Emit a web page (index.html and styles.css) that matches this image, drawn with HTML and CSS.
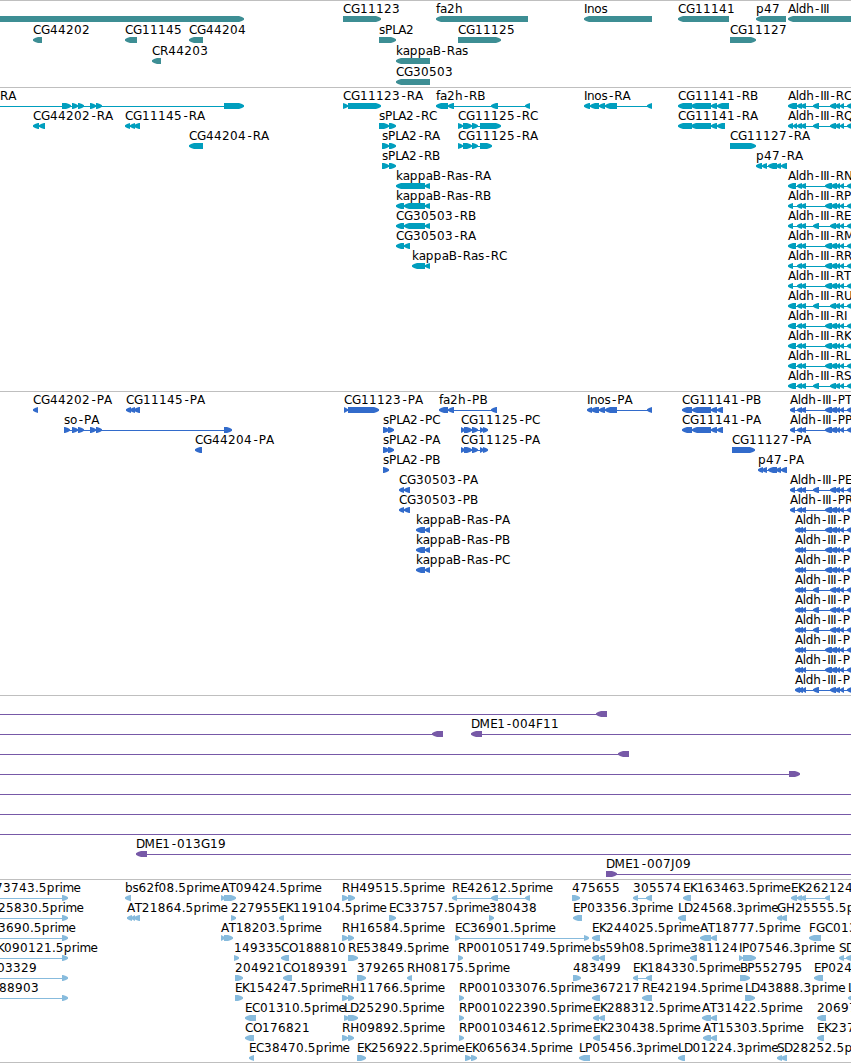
FILE: index.html
```html
<!DOCTYPE html>
<html lang="en">
<head>
    <meta charset="UTF-8">
    <meta name="viewport" content="width=device-width, initial-scale=1.0">
    <title>Genome Browser - so region</title>
    <link rel="stylesheet" href="styles.css">
</head>
<body>
    <!-- One section per annotation track, filled in by tracks.js -->
    <main class="browser">
        <section class="track track-gene" id="genes"></section>
        <section class="track track-transcript" id="transcripts"></section>
        <section class="track track-protein" id="proteins"></section>
        <section class="track track-clone" id="clones"></section>
        <section class="track track-est" id="ests"></section>
    </main>

    <script src="tracks.js"></script>
</body>
</html>
```

FILE: styles.css
```css
/* Base Styles */
body, html {
    margin: 0;
    padding: 0;
    background: #fff;
    overflow: hidden;
}

.browser {
    display: flex;
    flex-direction: column;
    border-bottom: 1px solid #bfbfbf;
}

/* Tracks */
.track {
    border-top: 1px solid #bfbfbf;
    overflow: hidden;
}

.track svg {
    display: block;
    width: 100%;
    height: 100%;
}

.track-gene {
    height: 86px;
    color: #3d8e94;
}

.track-transcript {
    height: 303px;
    color: #009ebe;
}

.track-protein {
    height: 303px;
    color: #326bcb;
}

.track-clone {
    height: 183px;
    color: #7759a7;
}

.track-est {
    height: 182px;
    color: #87bbdd;
}

/* Features */
.exon,
.intron {
    fill: currentColor;
}

.intron {
    shape-rendering: crispEdges;
}

.label {
    font-family: "DejaVu Sans", sans-serif;
    font-size: 12px;
    fill: #000;
}
```

FILE: tracks.js
```js
// Each feature: [row, label, strand, 'start-end start-end ...', labelX]
// '~' as the first or last block means the line runs off that side
const ALDH_A = '825-832 831-837 836-840 840-844 847-853 ~';
const ALDH_B = '813-819 830-836 835-840 840-844 847-853 ~';

const genes = [
    [0, '', '>', '~ 0-244'],
    [0, 'CG11123', '>', '343-381'],
    [0, 'fa2h', '<', '436-528'],
    [0, 'Inos', '<', '584-652'],
    [0, 'CG11141', '<', '678-729'],
    [0, 'p47', '<', '756-786'],
    [0, 'Aldh-III', '<', '788-870'],
    [1, 'CG44202', '<', '33-42'],
    [1, 'CG11145', '<', '125-137'],
    [1, 'CG44204', '<', '189-203'],
    [1, 'sPLA2', '>', '379-396'],
    [1, 'CG11125', '>', '458-501'],
    [1, 'CG11127', '>', '730-756'],
    [2, 'CR44203', '<', '152-161'],
    [2, 'kappaB-Ras', '<', '396-430'],
    [3, 'CG30503', '<', '396-430']
];

const transcripts = [
    [0, 'RA', '>', '~ 62-71 72-78 78-84 90-96 96-102 224-244', 0],
    [0, 'CG11123-RA', '>', '343-348 348-381'],
    [0, 'fa2h-RB', '<', '436-448 448-454 491-498 525-530'],
    [0, 'Inos-RA', '<', '584-590 590-599 599-605 605-617 647-652'],
    [0, 'CG11141-RB', '<', '678-692 691-711 711-717 717-729'],
    [0, 'Aldh-III-RC', '<', '788-797 797-802 801-806 ' + ALDH_B],
    [1, 'CG44202-RA', '<', '33-39 39-45'],
    [1, 'CG11145-RA', '<', '125-130 130-135 134-140'],
    [1, 'sPLA2-RC', '>', '379-389 389-396'],
    [1, 'CG11125-RC', '>', '458-463 463-472 472-478 480-501'],
    [1, 'CG11141-RA', '<', '678-692 691-711 711-717 717-725'],
    [1, 'Aldh-III-RQ', '<', '788-793 793-797 797-802 801-806 ' + ALDH_B],
    [2, 'CG44204-RA', '<', '189-203'],
    [2, 'sPLA2-RA', '>', '382-389 389-396'],
    [2, 'CG11125-RA', '>', '458-463 463-472 472-478 480-492'],
    [2, 'CG11127-RA', '>', '730-756'],
    [3, 'sPLA2-RB', '>', '382-389 389-396'],
    [3, 'p47-RA', '<', '756-762 762-767 768-777 776-781 781-787'],
    [4, 'kappaB-Ras-RA', '<', '396-425 425-430'],
    [5, 'kappaB-Ras-RB', '<', '396-404 404-425 425-430'],
    [6, 'CG30503-RB', '<', '396-404 404-425 425-430'],
    [7, 'CG30503-RA', '<', '396-404 404-410'],
    [8, 'kappaB-Ras-RC', '<', '412-425 425-430'],
    [4, 'Aldh-III-RN', '<', '788-796 797-802 801-806 ' + ALDH_A],
    [5, 'Aldh-III-RP', '<', '788-793 797-802 801-806 ' + ALDH_A],
    [6, 'Aldh-III-RE', '<', '788-793 797-802 801-806 ' + ALDH_B],
    [7, 'Aldh-III-RM', '<', '788-796 797-802 801-806 ' + ALDH_A],
    [8, 'Aldh-III-RR', '<', '788-793 797-802 801-806 ' + ALDH_A],
    [9, 'Aldh-III-RT', '<', '788-793 797-802 801-806 ' + ALDH_A],
    [10, 'Aldh-III-RU', '<', '788-796 797-802 801-806 ' + ALDH_B],
    [11, 'Aldh-III-RI', '<', '788-796 797-802 801-806 ' + ALDH_A],
    [12, 'Aldh-III-RK', '<', '788-796 797-802 801-806 ' + ALDH_A],
    [13, 'Aldh-III-RL', '<', '788-796 797-802 801-806 ' + ALDH_A],
    [14, 'Aldh-III-RS', '<', '788-796 797-802 801-806 ' + ALDH_B]
];

const proteins = [
    [0, 'CG44202-PA', '<', '33-38'],
    [0, 'CG11145-PA', '<', '126-131 130-135 134-140'],
    [0, 'CG11123-PA', '>', '344-348 348-379'],
    [0, 'fa2h-PB', '<', '439-448 448-454 491-497'],
    [0, 'Inos-PA', '<', '587-592 591-599 599-605 605-617 647-652'],
    [0, 'CG11141-PB', '<', '682-692 692-711 711-717 717-723'],
    [0, 'Aldh-III-PT', '<', '790-795 797-802 801-806 ' + ALDH_A],
    [1, 'so-PA', '>', '64-70 72-78 78-84 90-96 96-102 224-232'],
    [1, 'sPLA2-PC', '>', '383-389 388-394'],
    [1, 'CG11125-PC', '>', '461-465 464-472 472-478 480-484 483-488'],
    [1, 'CG11141-PA', '<', '682-692 692-711 711-717 717-723'],
    [1, 'Aldh-III-PP', '<', '790-795 797-802 801-806 ' + ALDH_A],
    [2, 'CG44204-PA', '<', '195-202'],
    [2, 'sPLA2-PA', '>', '383-389 388-394'],
    [2, 'CG11125-PA', '>', '461-465 464-472 472-478 480-484 483-488'],
    [2, 'CG11127-PA', '>', '732-755'],
    [3, 'sPLA2-PB', '>', '383-389'],
    [3, 'p47-PA', '<', '758-763 762-767 768-777 776-781 781-787'],
    [4, 'CG30503-PA', '<', '399-404 404-410'],
    [5, 'CG30503-PB', '<', '399-404 404-410'],
    [6, 'kappaB-Ras-PA', '<', '416-425 425-430'],
    [7, 'kappaB-Ras-PB', '<', '416-425 425-430'],
    [8, 'kappaB-Ras-PC', '<', '416-425 425-430'],
    [4, 'Aldh-III-PE', '<', '790-795 797-802 801-806 ' + ALDH_B],
    [5, 'Aldh-III-PR', '<', '790-795 797-802 801-806 ' + ALDH_A]
];

// Remaining Aldh-III isoforms share the same first exons
[ALDH_A, ALDH_A, ALDH_A, ALDH_B, ALDH_B, ALDH_B, ALDH_A, ALDH_A, ALDH_B].forEach((tail, i) => {
    proteins.push([6 + i, 'Aldh-III-P', '<', '795-800 798-803 802-806 ' + tail]);
});

const clones = [
    [0, '', '<', '~ 596-607'],
    [1, '', '<', '~ 432-443'],
    [1, 'DME1-004F11', '<', '471-482 ~'],
    [2, '', '<', '~ 618-629'],
    [3, '', '>', '~ 789-800'],
    [4, '', '>', '~ ~'],
    [5, '', '>', '~ ~'],
    [6, '', '>', '~ ~'],
    [7, 'DME1-013G19', '<', '136-147 ~'],
    [8, 'DME1-007J09', '>', '606-617 ~']
];

const ests = [
    [0, '73743.5prime', '>', '~ 62-68', -5],
    [0, 'bs62f08.5prime', '<', '125-131'],
    [0, 'AT09424.5prime', '>', '221-225 224-236'],
    [0, 'RH49515.5prime', '>', '342-348 348-355'],
    [0, 'RE42612.5prime', '<', '452-457 491-498 525-530'],
    [0, '475655', '>', '572-580'],
    [0, '305574', '<', '633-638 646-652'],
    [0, 'EK163463.5prime', '<', '683-691'],
    [0, 'EK262124', '<', '791-797 797-802 801-806 825-830'],
    [1, '25830.5prime', '>', '~ 62-68', -2],
    [1, 'AT21864.5prime', '<', '127-132 131-135 134-140'],
    [1, '227955', '>', '231-236'],
    [1, 'EK119104.5prime', '<', '279-284'],
    [1, 'EC33757.5prime', '>', '389-396'],
    [1, '380438', '>', '489-494'],
    [1, 'EP03356.3prime', '<', '573-582'],
    [1, 'LD24568.3prime', '<', '678-686'],
    [1, 'GH25555.5p', '<', '777-782 781-787'],
    [2, '3690.5prime', '>', '~ 62-68', -2],
    [2, 'AT18203.5prime', '>', '221-225 224-233'],
    [2, 'RH16584.5prime', '>', '342-348 348-354'],
    [2, 'EC36901.5prime', '>', '455-460 584-589'],
    [2, 'EK244025.5prime', '<', '592-600'],
    [2, 'AT18777.5prime', '<', '700-711 711-717'],
    [2, 'FGC013', '<', '809-821'],
    [3, 'K090121.5prime', '>', '~ 62-68', -3],
    [3, '149335', '>', '234-239'],
    [3, 'CO188810', '<', '281-289'],
    [3, 'RE53849.5prime', '>', '348-358'],
    [3, 'RP001051749.5prime', '>', '458-463'],
    [3, 'bs59h08.5prime', '<', '592-599 599-605'],
    [3, '381124', '<', '690-697'],
    [3, 'IP07546.3prime', '>', '739-743 743-756'],
    [3, 'SD', '<', '839-844 846-852'],
    [4, '03329', '>', '~ 62-68', -3],
    [4, '204921', '>', '235-243'],
    [4, 'CO189391', '<', '283-292'],
    [4, '379265', '>', '357-366'],
    [4, 'RH08175.5prime', '<', '407-412'],
    [4, '483499', '>', '573-581'],
    [4, 'EK184330.5prime', '<', '633-638 646-652'],
    [4, 'BP552795', '>', '740-750'],
    [4, 'EP024', '<', '814-823'],
    [5, '88903', '>', '~ 62-68', -1],
    [5, 'EK154247.5prime', '>', '235-243'],
    [5, 'RH11766.5prime', '>', '342-348 348-354'],
    [5, 'RP001033076.5prime', '>', '459-464'],
    [5, '367217', '<', '592-600'],
    [5, 'RE42194.5prime', '<', '642-652'],
    [5, 'LD43888.3prime', '>', '745-755'],
    [5, 'L', '<', '848-856'],
    [6, 'EC01310.5prime', '<', '245-256'],
    [6, 'LD25290.5prime', '>', '344-349 348-358'],
    [6, 'RP001022390.5prime', '>', '459-464'],
    [6, 'EK288312.5prime', '<', '593-599 599-605'],
    [6, 'AT31422.5prime', '<', '702-711 711-717'],
    [6, '20697', '<', '817-826'],
    [7, 'CO176821', '<', '245-254'],
    [7, 'RH09892.5prime', '>', '342-348 348-354'],
    [7, 'RP001034612.5prime', '>', '459-464'],
    [7, 'EK230438.5prime', '<', '593-600'],
    [7, 'AT15303.5prime', '<', '703-711 711-717'],
    [7, 'EK237', '<', '817-824'],
    [8, 'EC38470.5prime', '<', '249-254'],
    [8, 'EK256922.5prime', '>', '357-366'],
    [8, 'EK065634.5prime', '>', '465-471 471-477'],
    [8, 'LP05456.3prime', '<', '579-590'],
    [8, 'LD01224.3prime', '<', '678-685'],
    [8, 'SD28252.5prime', '<', '777-782 781-787']
];

// Pixel advance of each letter, everything else is 8
const ADVANCE = {
    A: 7.8, B: 7.2, C: 8, D: 8.6, E: 7, F: 7, G: 9, H: 9, I: 2.9, J: 4, K: 7, L: 6, M: 10.6, N: 9,
    O: 9, P: 7.3, Q: 9, R: 8.2, S: 7, T: 7, U: 8, '.': 3.8, '-': 6.8,
    a: 7, b: 7.5, d: 7.4, e: 7, f: 4, h: 7.3, i: 3, k: 6.7, l: 3, m: 11.2, n: 7.3, o: 7.2, r: 4.6, s: 6
};
const RIGHT = 860;

// Hyphens sit in the middle of their slot
function letterPositions(text, x) {
    return [...text].map(ch => {
        const at = ch === '-' ? x + 1.6 : x;
        x += ADVANCE[ch] || 8;
        return at.toFixed(1);
    }).join(' ');
}

// Block with a blunt arrow head on its strand side
function exon(start, end, y, strand) {
    const size = Math.min(5, end - start);
    const dir = strand === '<' ? 1 : -1;
    const tip = strand === '<' ? start : end;
    const back = strand === '<' ? end : start;
    const neck = tip + dir * size;
    const mid = tip + dir * 2;
    return `<path class="exon" d="M${back} ${y}H${neck}L${mid} ${y + 1}L${tip} ${y + 2.2}V${y + 3.8}L${mid} ${y + 5}L${neck} ${y + 6}H${back}Z"/>`;
}

function drawTrack(id, features, pitch) {
    let out = '';
    features.forEach(([row, label, strand, blocks, labelX]) => {
        const y = 15 + row * pitch;
        const parts = blocks.split(' ');
        const spans = parts.filter(p => p !== '~').map(p => p.split('-').map(Number));
        const from = parts[0] === '~' ? 0 : spans[0][0] + 1;
        const to = parts[parts.length - 1] === '~' ? RIGHT : spans[spans.length - 1][1] - 1;

        if (parts.length > 1) {
            out += `<rect class="intron" x="${from}" y="${y + 3}" width="${to - from}" height="1"/>`;
        }
        spans.forEach(([start, end]) => {
            out += exon(start, end, y, strand);
        });
        if (label) {
            const x = labelX === undefined ? spans[0][0] : labelX;
            out += `<text class="label" x="${letterPositions(label, x)}" y="${y - 3}">${label}</text>`;
        }
    });
    document.getElementById(id).innerHTML = `<svg>${out}</svg>`;
}

drawTrack('genes', genes, 21);
drawTrack('transcripts', transcripts, 20);
drawTrack('proteins', proteins, 20);
drawTrack('clones', clones, 20);
drawTrack('ests', ests, 20);
```
